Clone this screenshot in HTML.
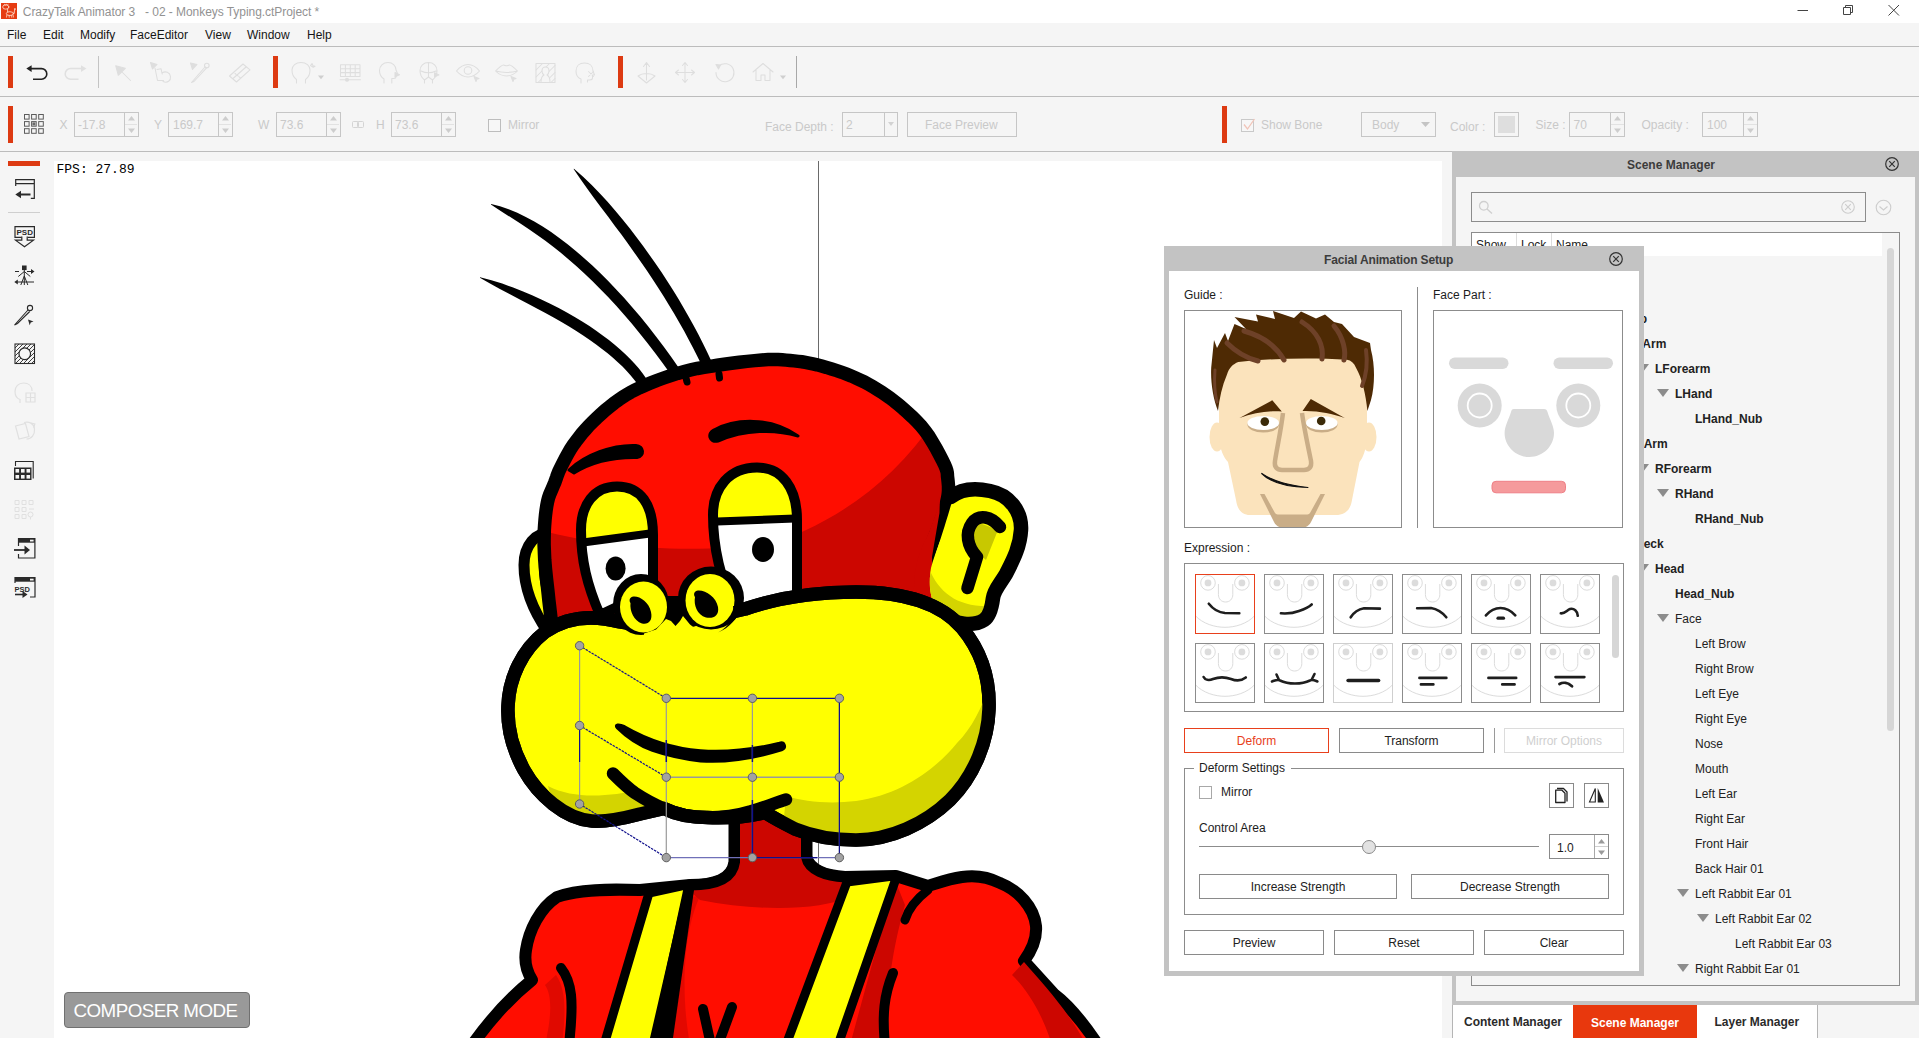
<!DOCTYPE html>
<html>
<head>
<meta charset="utf-8">
<title>CrazyTalk Animator 3</title>
<style>
*{box-sizing:border-box;margin:0;padding:0}
html,body{width:1919px;height:1038px;overflow:hidden;background:#f5f5f5;font-family:"Liberation Sans",sans-serif;font-size:12px;color:#222}
.abs{position:absolute}
#root{position:relative;width:1919px;height:1038px;overflow:hidden;background:#f5f5f5}
.hline{position:absolute;left:0;width:1919px;height:1px;background:#bcbcbc}
.rbar{position:absolute;background:#dd3a12}
.t{position:absolute;white-space:nowrap;line-height:14px}
.dis{color:#c9c9c9}
.box{position:absolute;border:1px solid #c6c6c6;background:#f5f5f5}
.btn{position:absolute;border:1px solid #8a8a8a;background:#fff;text-align:center;font-size:12px;color:#222}
svg{position:absolute;overflow:visible}
/*TOP*/
#titlebar{left:0;top:0;width:1919px;height:23px;background:#fff}
/*CANVAS*/
#canvas{left:54px;top:161px;width:1388px;height:877px;background:#fff;overflow:hidden}
/*SCENE MANAGER*/
#sm{left:1452px;top:151px;width:467px;height:854px;background:#c3c3c3}
#smin{left:4px;top:26px;width:459px;height:824px;background:#f5f5f5}
.tree{position:absolute;white-space:nowrap;line-height:14px;font-size:12px;color:#222}
.tree.b{font-weight:bold}
.tri{position:absolute;width:0;height:0;border-left:6px solid transparent;border-right:6px solid transparent;border-top:8px solid #8c8c8c}
/*DIALOG*/
#dlg{left:1164px;top:246px;width:480px;height:730px;background:#c3c3c3}
#dlgin{left:5px;top:25px;width:470px;height:700px;background:#fff}
</style>
</head>
<body>
<div id="root">

<!-- TITLE BAR -->
<div id="titlebar" class="abs"></div>
<svg style="left:1px;top:3px" width="16" height="16" viewBox="0 0 16 16"><rect width="16" height="16" fill="#e63c12"/><g fill="none" stroke="#ffe6d8" stroke-width=".9" stroke-linecap="round" opacity=".9"><ellipse cx="4.800" cy="4" rx="3.100" ry="2.200"/><path d="M2.800 2.200l.8-.8.900.700.900-.800.800.800.900-.600"/><ellipse cx="8.900" cy="10.600" rx="3.600" ry="1.900"/><path d="M6.600 6.200v2.700M13.900 6.200l-.9 3.800M12.400 10.600l1 -.6"/><path d="M5.800 12.200l-.3 2M8.200 12.500v1.800M10.600 12.400l.2 1.900M12 11.800l.5 2.300" stroke-width=".8"/></g><circle cx="13.900" cy="6" r=".8" fill="#fff3e8"/></svg>
<div class="t" id="ttl" style="left:22.800px;top:4.500px;color:#929292;font-size:12px;letter-spacing:-0.05px">CrazyTalk Animator 3&nbsp;&nbsp; - 02 - Monkeys Typing.ctProject *</div>
<svg style="left:1797px;top:4px" width="104" height="13" viewBox="0 0 104 13" fill="none" stroke="#444" stroke-width="1"><path d="M0.5 6.5h10.5"/><path d="M46.5 3.5h7v7h-7zM48.5 3.5v-2h7v7h-2"/><path d="M91.5 1l10.5 10.5M102 1L91.5 11.5"/></svg>


<!-- MENU -->
<div class="t" style="left:7px;top:27.5px;color:#161616">File</div>
<div class="t" style="left:43px;top:27.5px;color:#161616">Edit</div>
<div class="t" style="left:80px;top:27.5px;color:#161616">Modify</div>
<div class="t" style="left:130px;top:27.5px;color:#161616">FaceEditor</div>
<div class="t" style="left:205px;top:27.5px;color:#161616">View</div>
<div class="t" style="left:247px;top:27.5px;color:#161616">Window</div>
<div class="t" style="left:307px;top:27.5px;color:#161616">Help</div>

<div class="hline" style="top:46px"></div>
<div class="hline" style="top:96px"></div>
<div class="hline" style="top:151px"></div>

<!-- TOOLBAR1 -->
<div class="rbar" style="left:8px;top:56px;width:5px;height:32px"></div>
<div class="rbar" style="left:273px;top:56px;width:5px;height:32px"></div>
<div class="rbar" style="left:618px;top:56px;width:5px;height:32px"></div>
<div class="abs" style="left:98px;top:56px;width:1px;height:32px;background:#c4c4c4"></div>
<div class="abs" style="left:796px;top:56px;width:1px;height:32px;background:#a8a8a8"></div>
<!-- undo -->
<svg style="left:26px;top:64px" width="22" height="17" viewBox="0 0 22 17" fill="none" stroke="#222" stroke-width="1.6"><path d="M4 4.6h11.5a5 5 0 0 1 0 10.6H7"/><path d="M0.3 4.6L5.6 1.2v6.8z" fill="#222" stroke="none"/></svg>
<!-- redo -->
<svg style="left:64px;top:64px" width="23" height="17" viewBox="0 0 23 17" fill="none" stroke="#e0e0e0" stroke-width="1.500"><path d="M18.5 4.6H6.5a5 5 0 0 0 0 10.6h8"/><path d="M22.5 4.6L17 1.2v6.8z" fill="#e0e0e0" stroke="none"/></svg>
<!-- disabled icon group -->
<svg style="left:0;top:47px" width="820" height="49" viewBox="0 47 820 49" fill="none" stroke="#dedede" stroke-width="1.050" stroke-linecap="round" stroke-linejoin="round">
<!-- arrow cursor -->
<path d="M121 71l9.500 9.500"/><path d="M115.700 65.700l9.600 2.600-7 7z" fill="#dedede"/>
<!-- bone select -->
<path d="M150.500 62.500l6.500 2-4.500 4.500z" fill="#dedede"/><path d="M155 68l2.500 12.500h6M157 69.500l4-.8 1.200 5.300M162 73c3.500-2.500 8-.5 8.500 3.500s-3 7-7.500 5"/>
<!-- pin tool -->
<path d="M190.500 63l6.500 1.500-4.500 5z" fill="#dedede"/><circle cx="206.800" cy="65.500" r="2.300"/><path d="M205 67l-13.500 15.500 2.500-1 12.800-13.800"/>
<!-- eraser -->
<path d="M229.500 76l13.500-12 7 5.800-13.500 12.200zM233 78.500l13-11.500" /><path d="M235 73.500l5.500 4.500" stroke-dasharray="1.500 1.200"/>
<!-- head dropdown -->
<path d="M296.500 83v-3.500c-3-2-4.500-5.500-4.500-9.500 0-4.500 3.800-7.500 9-7.500s9 3 9 7.500c0 4-1.500 7.500-4.500 9.500v3.500"/><path d="M310.500 65.500l1.500-2 1 2.200 2 .6-1.800 1z"/>
<path d="M318 75.500h6l-3 3.800z" fill="#cfcfcf" stroke="none"/>
<!-- grid -->
<path d="M340.500 64.800h19.500v11.700h-19.500zM345.400 64.800v11.700M350.300 64.800v11.700M355.200 64.800v11.700M340.500 68.700h19.500M340.500 72.600h19.500M340 79.800h20.500"/><circle cx="347" cy="79.800" r="1.500" fill="#dedede"/>
<!-- head2 -->
<path d="M384 83v-4c-2.500-1.500-4.500-4.500-4.500-8.500 0-4.500 3.500-8 8.500-8 4.500 0 8 3 8 7.500l1.500 3.500h-1.500v3c0 1.200-.8 2-2.200 2h-2v4.500"/><path d="M395 72.500l4.500 2.200-4.500 2.200z" fill="#dedede"/>
<!-- head3 -->
<path d="M424.500 83v-3c-2.500-2-4.500-5-4.500-9.500 0-4.500 3.500-8 8.500-8s8.500 3.500 8.500 8c0 4.500-2 7.500-4.500 9.500v3M428.500 62.500v14M421 71c2.500 1.200 5 1.800 7.500 1.800s5-.6 7.500-1.800M424.500 80l4-3 4 3"/><path d="M434.500 72.700l4.500 2.200-4.500 2.200z" fill="#dedede"/>
<!-- eye -->
<path d="M456.500 71c4-5 8-6.500 11.500-6.500s7.500 1.500 11.500 6.500c-4 4.500-8 6-11.500 6s-7.500-1.500-11.500-6z"/><circle cx="468" cy="70.500" r="3.800"/><path d="M474 76.500l5 2-2.200.8-.8 2.200z" fill="#dedede"/>
<!-- lips -->
<path d="M495.500 71c3-3 6-6 8-6 1.200 0 1.800.8 3 .8s1.800-.8 3-.8c2 0 5 3 8 6-3 3-6 5-11 5s-8-2-11-5zM495.500 71c4 1 7 1.400 11 1.400s7-.4 11-1.400"/><path d="M511 76.500l5 2-2.200.8-.8 2.200z" fill="#dedede"/>
<!-- hatched -->
<path d="M536 63.500h19v19h-19z"/><path d="M536 70l6.500-6.500M536 77l13.500-13.500M538 82.500l17-17M545 82.500l10-10M551 82.500l4-4" /><path d="M541 82c0-4 1-6 3-7-1.500-1-2-2.500-2-4 0-2.500 1.500-4 3.500-4s3.500 1.500 3.500 4c0 1.500-.5 3-2 4 2 1 3 3 3 7" fill="#f5f5f5"/>
<!-- head x -->
<path d="M581 83v-4c-3-1-5-4-5-8 0-5 3.500-8 8.500-8s8.500 3 8.500 8l1.500 4h-2v3c0 1-1 2-3 2h-2v2"/><path d="M588.500 71.500l5 5M593.500 71.500l-5 5"/>
<!-- z move -->
<path d="M646.500 63v17M643.500 66.500l3-4 3 4M638 76c2-1.500 4-2.500 8.500-2.500s6.500 1 8.500 2.500l-8.500 7z"/>
<!-- cross move -->
<path d="M685 63v19M675.500 72.500h19M682.500 65.500l2.500-3 2.500 3M682.500 79.500l2.500 3 2.500-3M678.500 70l-3 2.500 3 2.500M691.500 70l3 2.500-3 2.500"/>
<!-- rotate -->
<path d="M719 66a9 9 0 1 1-3 6.500"/><path d="M716 64.500l4.500.5-2 4z" fill="#dedede"/>
<!-- home -->
<path d="M753 72l10-8.500 10 8.500M756 70v10.500h5v-5.500h4v5.500h5v-10.500"/>
<path d="M780 75.500h6l-3 3.800z" fill="#cfcfcf" stroke="none"/>
</svg>


<!-- TOOLBAR2 -->
<div class="rbar" style="left:8px;top:106px;width:5px;height:36.500px"></div>
<div class="rbar" style="left:1222px;top:106px;width:5px;height:36.500px"></div>
<svg style="left:24px;top:114px" width="21" height="21" viewBox="0 0 21 21" fill="none" stroke="#5c5c5c" stroke-width="1"><rect x="0.50" y="0.50" width="4.6" height="4.6"/><rect x="7.60" y="0.50" width="4.6" height="4.6"/><rect x="14.70" y="0.50" width="4.6" height="4.6"/><rect x="0.50" y="7.60" width="4.6" height="4.6"/><rect x="7.60" y="7.60" width="4.6" height="4.6"/><rect x="14.70" y="7.60" width="4.6" height="4.6"/><rect x="0.50" y="14.70" width="4.6" height="4.6"/><rect x="7.60" y="14.70" width="4.6" height="4.6"/><rect x="14.70" y="14.70" width="4.6" height="4.6"/><rect x="8.400" y="8.400" width="3" height="3" fill="#6a6a6a" stroke="none"/></svg>
<div class="t" style="left:59.5px;top:117.5px;color:#c9c9c9;">X</div>
<div class="box" style="left:74px;top:112px;width:65px;height:25px"></div>
<div class="abs" style="left:124px;top:113px;width:1px;height:23px;background:#c6c6c6"></div>
<div class="abs" style="left:125px;top:124px;width:12px;height:1px;background:#e2e2e2"></div>
<svg style="left:127.5px;top:116px" width="7" height="17" viewBox="0 0 7 17"><path d="M0 4.500h7l-3.500-4.500z M0 12.500h7l-3.500 4.500z" fill="#cdcdcd"/></svg>
<div class="t" style="left:78px;top:117.5px;color:#c9c9c9;">-17.8</div>
<div class="t" style="left:154px;top:117.5px;color:#c9c9c9;">Y</div>
<div class="box" style="left:168px;top:112px;width:65px;height:25px"></div>
<div class="abs" style="left:218px;top:113px;width:1px;height:23px;background:#c6c6c6"></div>
<div class="abs" style="left:219px;top:124px;width:12px;height:1px;background:#e2e2e2"></div>
<svg style="left:221.5px;top:116px" width="7" height="17" viewBox="0 0 7 17"><path d="M0 4.500h7l-3.500-4.500z M0 12.500h7l-3.500 4.500z" fill="#cdcdcd"/></svg>
<div class="t" style="left:173px;top:117.5px;color:#c9c9c9;">169.7</div>
<div class="t" style="left:258px;top:117.5px;color:#c9c9c9;">W</div>
<div class="box" style="left:276px;top:112px;width:65px;height:25px"></div>
<div class="abs" style="left:326px;top:113px;width:1px;height:23px;background:#c6c6c6"></div>
<div class="abs" style="left:327px;top:124px;width:12px;height:1px;background:#e2e2e2"></div>
<svg style="left:329.5px;top:116px" width="7" height="17" viewBox="0 0 7 17"><path d="M0 4.500h7l-3.500-4.500z M0 12.500h7l-3.500 4.500z" fill="#cdcdcd"/></svg>
<div class="t" style="left:280px;top:117.5px;color:#c9c9c9;">73.6</div>
<svg style="left:352px;top:121px" width="12" height="7" viewBox="0 0 12 7" fill="none" stroke="#d4d4d4" stroke-width="1"><rect x=".5" y=".5" width="6" height="6" rx="1"/><rect x="5.500" y=".5" width="6" height="6" rx="1"/></svg>
<div class="t" style="left:376px;top:117.5px;color:#c9c9c9;">H</div>
<div class="box" style="left:391px;top:112px;width:65px;height:25px"></div>
<div class="abs" style="left:441px;top:113px;width:1px;height:23px;background:#c6c6c6"></div>
<div class="abs" style="left:442px;top:124px;width:12px;height:1px;background:#e2e2e2"></div>
<svg style="left:444.5px;top:116px" width="7" height="17" viewBox="0 0 7 17"><path d="M0 4.500h7l-3.500-4.500z M0 12.500h7l-3.500 4.500z" fill="#cdcdcd"/></svg>
<div class="t" style="left:395px;top:117.5px;color:#c9c9c9;">73.6</div>
<div class="abs" style="left:488px;top:119px;width:13px;height:13px;border:1px solid #bdbdbd;background:#f7f7f7"></div>
<div class="t" style="left:508px;top:117.5px;color:#c9c9c9;">Mirror</div>
<div class="t" style="left:765px;top:119.5px;color:#c9c9c9;">Face Depth :</div>
<div class="box" style="left:842px;top:112px;width:56px;height:25px"></div>
<div class="abs" style="left:884px;top:113px;width:1px;height:23px;background:#c6c6c6"></div>
<svg style="left:888px;top:122px" width="6" height="4" viewBox="0 0 6 4"><path d="M0 0h6l-3 4z" fill="#d2d2d2"/></svg>
<div class="t" style="left:846px;top:117.5px;color:#c9c9c9;">2</div>
<div class="box" style="left:907px;top:112px;width:110px;height:25px"></div>
<div class="t" style="left:925px;top:117.5px;color:#c9c9c9;">Face Preview</div>
<div class="abs" style="left:1241px;top:119px;width:13px;height:13px;border:1px solid #c9c9c9;background:#f7f7f7"></div>
<svg style="left:1241px;top:116px" width="16" height="16" viewBox="0 0 16 16" fill="none" stroke="#f1c4b8" stroke-width="1.3"><path d="M3 8.500l3.500 4.500 7-10"/></svg>
<div class="t" style="left:1261px;top:117.5px;color:#c9c9c9;">Show Bone</div>
<div class="box" style="left:1361px;top:112px;width:75px;height:25px"></div>
<div class="t" style="left:1372px;top:117.5px;color:#c9c9c9;">Body</div>
<svg style="left:1420.500px;top:121.500px" width="9" height="5" viewBox="0 0 9 5"><path d="M0 0h9l-4.500 5z" fill="#c4c4c4"/></svg>
<div class="t" style="left:1450px;top:119.5px;color:#c9c9c9;">Color :</div>
<div class="box" style="left:1494px;top:112px;width:25px;height:25px"></div>
<div class="abs" style="left:1498px;top:116px;width:17px;height:17px;background:#dedede"></div>
<div class="t" style="left:1535.5px;top:117.5px;color:#c9c9c9;">Size :</div>
<div class="box" style="left:1569px;top:112px;width:56px;height:25px"></div>
<div class="abs" style="left:1610px;top:113px;width:1px;height:23px;background:#c6c6c6"></div>
<div class="abs" style="left:1611px;top:124px;width:13px;height:1px;background:#e2e2e2"></div>
<svg style="left:1614.0px;top:116px" width="7" height="17" viewBox="0 0 7 17"><path d="M0 4.500h7l-3.500-4.500z M0 12.500h7l-3.500 4.500z" fill="#cdcdcd"/></svg>
<div class="t" style="left:1573.5px;top:117.5px;color:#c9c9c9;">70</div>
<div class="t" style="left:1641.5px;top:117.5px;color:#c9c9c9;">Opacity :</div>
<div class="box" style="left:1702px;top:112px;width:56px;height:25px"></div>
<div class="abs" style="left:1743px;top:113px;width:1px;height:23px;background:#c6c6c6"></div>
<div class="abs" style="left:1744px;top:124px;width:13px;height:1px;background:#e2e2e2"></div>
<svg style="left:1747.0px;top:116px" width="7" height="17" viewBox="0 0 7 17"><path d="M0 4.500h7l-3.500-4.500z M0 12.500h7l-3.500 4.500z" fill="#cdcdcd"/></svg>
<div class="t" style="left:1707px;top:117.5px;color:#c9c9c9;">100</div>


<!-- LEFT TOOLBAR -->
<div class="rbar" style="left:8px;top:161px;width:32px;height:5px"></div>
<div class="abs" style="left:8px;top:212px;width:32px;height:1px;background:#cfcfcf"></div>
<svg style="left:0;top:170px" width="54" height="440" viewBox="0 170 54 440" fill="none" stroke="#2a2a2a" stroke-width="1.4" stroke-linejoin="miter">
<!-- return -->
<path d="M15.700 186v-6.300h18.600v18.600h-3.500M15.700 183.600h18.600" stroke-width="1.2"/><path d="M20 194.500h10.500" stroke-width="2"/><path d="M15.300 194.500l5.700-3.800v7.600z" fill="#2a2a2a" stroke="none"/>
<!-- PSD down -->
<path d="M21.800 237.400h-6.800v-10.700h19.400v10.700h-6.800" stroke-width="1.200"/>
<path d="M21.800 236.500v3.700h-6.300l9 6.600 9-6.600h-6.300v-3.700" stroke-width="1.200" fill="#f5f5f5"/>
<text x="24.700" y="235.300" font-family="Liberation Sans" font-size="8" font-weight="bold" fill="#2a2a2a" stroke="none" text-anchor="middle">PSD</text>
<!-- skeleton -->
<rect x="22" y="265.500" width="4.600" height="4.600" fill="#2a2a2a" stroke="none"/>
<path d="M24.300 270v6M24.300 271.500l-6 5M24.300 271.500l6 5M24.300 276l-3.500 9M24.300 276l3.500 9M24.300 276v9" stroke-width="1"/>
<path d="M15 271.500h4M27 271.500h5M17 282h17" stroke-width="1"/><path d="M34.500 271.500l-3.500-2.500v5zM14.300 282l3.500-2.500v5z" fill="#2a2a2a" stroke="none"/>
<!-- pin -->
<circle cx="30" cy="308" r="2.600" stroke-width="1.100"/><path d="M28 310l-13.500 15 3-1.500 12.200-12" stroke-width="1.100"/><path d="M28 319.500l5.500 2-2.800 1-1 2.800z" fill="#2a2a2a" stroke="none"/>
<!-- hatched circle -->
<rect x="15" y="344" width="19.500" height="19.500" fill="#f5f5f5" stroke-width="1.100"/>
<path d="M15 348l4-4M15 352l8-8M15 356l12-12M15 360l16-16M15.500 363.500l19-19M19.500 363.500l15-15M23.500 363.500l11-11M27.500 363.500l7-7M31.500 363.500l3-3" stroke-width=".9"/>
<circle cx="24.750" cy="353.750" r="5.800" fill="#f5f5f5" stroke-width="1.200"/>
<!-- grid 3x2 dark -->
<path d="M15.500 466v-4.500h17.700v17" stroke-width="1.100"/>
<rect x="14" y="467.500" width="17.500" height="12.500" fill="#2a2a2a" stroke="none"/>
<g fill="#f5f5f5" stroke="none"><rect x="15.500" y="469" width="3.600" height="3.600"/><rect x="21" y="469" width="3.600" height="3.600"/><rect x="26.500" y="469" width="3.600" height="3.600"/><rect x="15.500" y="475" width="3.600" height="3.600"/><rect x="21" y="475" width="3.600" height="3.600"/><rect x="26.500" y="475" width="3.600" height="3.600"/></g>
<!-- import -->
<path d="M18.500 546v-7.500h16.400v19.500h-16.400v-4" stroke-width="1.200"/><rect x="18.500" y="538.500" width="16.400" height="4.200" fill="#2a2a2a" stroke="none"/><rect x="30" y="539.700" width="3.600" height="1.800" fill="#f5f5f5" stroke="none"/>
<path d="M14 550h11" stroke-width="1.800"/><path d="M30 550l-5.500-4.500v9z" fill="#2a2a2a" stroke="none"/>
<!-- psd export -->
<path d="M15 583v-5.500h20v19.500h-5" stroke-width="1.200"/><rect x="15" y="577.500" width="20" height="4.200" fill="#2a2a2a" stroke="none"/><rect x="30" y="578.700" width="3.600" height="1.800" fill="#f5f5f5" stroke="none"/>
<text x="14.500" y="591.500" font-family="Liberation Sans" font-size="7.500" font-weight="bold" fill="#2a2a2a" stroke="none">PSD</text>
<path d="M15 594.500h8" stroke-width="1.600"/><path d="M27.500 594.500l-5-3.500v7z" fill="#2a2a2a" stroke="none"/>
<!-- disabled: head -->
<g stroke="#e0e0e0" stroke-width="1.200">
<path d="M20 403v-3.500c-3-1-5-4-5-8 0-5 3.500-8.500 8.500-8.500s8.500 3 8.500 8"/><path d="M26 393h9v9h-9zM30.500 393v9M26 397.500h9"/>
<path d="M15.500 426l10-2.500 3.500 13-10 2.500zM24 422.500c5-1.500 10 1 10.500 6.500s-3 10-8 10"/><path d="M31 423l3.800 1-1 3.600"/>
<path d="M15 500.500h4v4h-4zM22 500.500h4v4h-4zM29 500.500h4v4h-4zM15 507.500h4v4h-4zM22 507.500h4v4h-4zM15 514.500h4v4h-4zM22 514.500h4v4h-4z" stroke-width="1"/><circle cx="30.500" cy="514.500" r="2.500" stroke-width="1"/><path d="M29 509h5M30.500 517v2.500" stroke-width="1"/>
</g>
</svg>


<!-- CANVAS -->
<div id="canvas" class="abs">
<div class="t" style="left:2.500px;top:0.500px;font-family:'Liberation Mono',monospace;font-size:13px;color:#000;line-height:15px">FPS: 27.89</div>
<svg style="left:0;top:0" width="1388" height="877" viewBox="54 161 1388 877">
<rect x="818" y="161" width="1" height="877" fill="#6a6a6a"/>
<path d="M573.6,169.1 L580.4,179.1 L587.3,188.8 L594.2,198.2 L601.1,207.5 L608.0,216.6 L614.7,225.7 L621.4,234.6 L627.9,243.5 L634.2,252.4 L640.4,261.2 L646.5,270.0 L652.3,278.8 L658.0,287.5 L663.6,296.2 L668.9,304.9 L674.1,313.5 L679.1,322.2 L684.0,330.8 L688.6,339.4 L693.1,347.9 L697.4,356.5 L701.6,365.0 L705.5,373.5 L709.3,382.0 L718.7,378.0 L715.0,369.3 L711.1,360.6 L707.0,351.8 L702.7,343.1 L698.3,334.3 L693.6,325.5 L688.7,316.7 L683.7,307.9 L678.5,299.1 L673.1,290.3 L667.5,281.4 L661.7,272.6 L655.7,263.7 L649.5,254.9 L643.1,246.0 L636.5,237.2 L629.7,228.3 L622.6,219.5 L615.3,210.8 L607.8,202.1 L599.9,193.5 L591.7,185.0 L583.1,176.7 L574.0,168.7Z" fill="#000"/>
<path d="M490.9,204.6 L498.4,209.5 L506.1,214.4 L513.8,219.3 L521.5,224.3 L529.3,229.5 L537.2,234.9 L545.0,240.6 L552.9,246.6 L560.8,252.8 L568.7,259.4 L576.5,266.3 L584.4,273.5 L592.3,281.0 L600.2,288.9 L608.1,297.1 L616.0,305.6 L623.9,314.4 L631.7,323.6 L639.6,333.2 L647.4,343.0 L655.3,353.2 L663.1,363.8 L671.0,374.7 L678.8,385.9 L687.2,380.1 L679.4,368.7 L671.6,357.6 L663.8,346.8 L656.0,336.4 L648.1,326.3 L640.2,316.6 L632.2,307.2 L624.2,298.1 L616.2,289.4 L608.2,281.0 L600.2,273.0 L592.1,265.3 L583.9,257.9 L575.8,250.9 L567.6,244.3 L559.3,238.0 L551.1,232.1 L542.7,226.6 L534.3,221.5 L525.8,216.9 L517.3,212.8 L508.7,209.2 L500.0,206.2 L491.1,204.0Z" fill="#000"/>
<path d="M479.9,277.8 L490.0,283.5 L499.9,288.9 L509.5,294.0 L518.9,298.9 L528.0,303.7 L536.9,308.4 L545.4,313.0 L553.6,317.5 L561.5,322.1 L569.1,326.6 L576.3,331.0 L583.2,335.5 L589.8,340.0 L596.1,344.4 L602.0,348.9 L607.6,353.3 L612.9,357.7 L617.8,362.2 L622.5,366.6 L626.7,371.0 L630.7,375.5 L634.4,379.9 L637.7,384.3 L640.7,388.7 L649.3,383.3 L646.2,378.4 L642.7,373.5 L638.9,368.6 L634.7,363.8 L630.2,359.0 L625.4,354.2 L620.2,349.4 L614.7,344.7 L608.9,340.0 L602.7,335.4 L596.2,330.7 L589.4,326.1 L582.2,321.6 L574.7,317.1 L566.9,312.6 L558.7,308.1 L550.2,303.8 L541.3,299.5 L532.1,295.3 L522.5,291.2 L512.5,287.3 L502.2,283.6 L491.4,280.2 L480.1,277.2Z" fill="#000"/>
<path d="M734.5,805 L734.5,862 C732,880 714,885 690,885 L640,890 C610,889 578,889 557,897 C540,908 529,930 526,950 C524,962 527,972 532,980 C517,992 493,1015 470,1048 L1100,1048 C1085,1025 1070,1006 1054,994 L1024,961 C1032,950 1037,938 1036,926 C1034,907 1018,890 1000,883 C988,877 975,875 962,877 C948,879 938,883 928,886 L896,876 L845,877 C826,876 809,870 806.5,857 L806.5,805 Z" fill="#ff0d00" stroke="#000" stroke-width="12" stroke-linejoin="round"/>
<clipPath id="cb"><path d="M734.5,805 L734.5,862 C732,880 714,885 690,885 L640,890 C610,889 578,889 557,897 C540,908 529,930 526,950 C524,962 527,972 532,980 C517,992 493,1015 470,1048 L1100,1048 C1085,1025 1070,1006 1054,994 L1024,961 C1032,950 1037,938 1036,926 C1034,907 1018,890 1000,883 C988,877 975,875 962,877 C948,879 938,883 928,886 L896,876 L845,877 C826,876 809,870 806.5,857 L806.5,805 Z"/></clipPath>
<g clip-path="url(#cb)">
<path d="M729,800 L813,800 L813,858 C818,872 835,876 850,878 L850,897 C820,910 760,912 700,900 L684,886 C712,886 729,878 729,860Z" fill="#cc0600"/>
<path d="M905,905 C895,940 888,975 884,1045 L850,1045 L895,880Z" fill="#cc0600"/>
<path d="M1024,962 C1044,985 1068,1010 1088,1048 L1053,1048 C1043,1015 1028,990 1012,975Z" fill="#cc0600"/>
<path d="M556,975 C566,990 566,1010 562,1045 L545,1045 C552,1015 552,995 545,985Z" fill="#cc0600" opacity=".6"/>
<path d="M660,900 C655,940 650,990 652,1045 L690,1045 C680,990 684,930 700,896Z" fill="#cc0600" opacity=".55"/>
</g>
<path d="M734.5,810 L734.5,862 C732,880 714,885 690,885" fill="none" stroke="#000" stroke-width="11"/>
<path d="M806.5,810 L806.5,857 C809,870 826,876 845,877" fill="none" stroke="#000" stroke-width="11" stroke-linecap="round"/>
<path d="M561,968 C572,982 574,1000 569,1045" fill="none" stroke="#000" stroke-width="10" stroke-linecap="round"/>
<path d="M893,973 C884,995 882,1015 885,1045" fill="none" stroke="#000" stroke-width="10" stroke-linecap="round"/>
<path d="M928,890 C915,900 908,910 905,920" fill="none" stroke="#000" stroke-width="9" stroke-linecap="round"/>
<path d="M703,1009 L711,1045 M732,1007 L718,1045" fill="none" stroke="#000" stroke-width="10" stroke-linecap="round"/>
<path d="M649,893 L690,884 L653,1045 L604,1045 Z" fill="#ffff00" stroke="#000" stroke-width="9" stroke-linejoin="round"/>
<path d="M695,883 L672,1045 L650,1045 L684,886Z" fill="#000"/>
<path d="M847,882 L897,875.500 L838,1045 L786,1045 Z" fill="#ffff00" stroke="#000" stroke-width="9" stroke-linejoin="round"/>
<path d="M552,532 C535,532 524,546 524,565 C524,590 534,612 548,632 L575,632 L575,532Z" fill="#ffff00" stroke="#000" stroke-width="11" stroke-linejoin="round"/>
<path d="M541,560 C540,580 545,600 553,618" fill="none" stroke="#000" stroke-width="4" stroke-linecap="round"/>
<path d="M551.7,625.4 L551.0,618.3 L550.3,612.4 L549.6,606.4 L548.9,600.6 L548.3,594.8 L547.7,589.3 L547.1,584.0 L546.5,578.9 L546.0,574.0 L545.5,569.2 L545.1,564.4 L544.7,559.6 L544.5,554.7 L544.3,549.8 L544.1,544.9 L544.1,540.0 L544.2,535.2 L544.3,530.3 L544.6,525.3 L545.0,520.2 L545.5,515.1 L546.1,510.2 L546.8,505.6 L547.6,501.5 L548.5,497.9 L549.6,494.7 L550.9,491.6 L552.2,488.6 L553.5,485.5 L554.8,482.4 L555.8,479.7 L556.6,477.4 L557.2,475.5 L557.9,473.7 L558.7,471.6 L560.0,468.9 L561.7,465.5 L563.6,461.7 L565.7,457.6 L568.0,453.5 L570.4,449.4 L573.0,445.4 L575.8,441.5 L578.8,437.6 L581.9,433.6 L585.3,429.7 L588.8,425.8 L592.6,422.0 L596.6,418.1 L600.8,414.2 L605.3,410.2 L609.9,406.5 L614.4,402.9 L618.8,399.7 L623.0,396.9 L626.9,394.4 L630.9,392.1 L635.0,390.0 L639.5,387.8 L644.7,385.5 L650.5,383.1 L656.9,380.5 L663.7,378.0 L670.7,375.6 L677.6,373.4 L684.3,371.5 L690.8,369.9 L697.3,368.5 L703.9,367.4 L710.5,366.3 L717.3,365.3 L724.2,364.3 L731.6,363.3 L739.3,362.3 L747.1,361.4 L754.7,360.6 L761.8,360.0 L768.1,359.6 L773.4,359.5 L778.1,359.5 L782.2,359.7 L786.1,360.1 L790.1,360.5 L794.2,360.9 L798.2,361.4 L801.9,361.8 L805.4,362.4 L809.0,363.1 L812.8,363.9 L817.0,364.8 L821.6,366.0 L826.5,367.4 L831.6,369.0 L836.8,370.6 L841.8,372.3 L846.6,374.1 L851.1,375.9 L855.5,377.8 L859.8,379.8 L864.1,381.8 L868.3,384.1 L872.6,386.5 L876.9,389.2 L881.3,391.9 L885.6,394.8 L890.0,397.9 L894.3,401.2 L898.7,404.8 L903.2,408.6 L907.8,412.7 L912.4,417.0 L916.9,421.4 L921.1,426.0 L925.0,430.8 L928.8,436.1 L932.5,442.1 L936.1,448.3 L939.4,454.5 L942.3,460.1 L944.6,464.8 L946.0,468.2 L946.8,470.6 L947.2,472.3 L947.4,474.0 L947.5,476.2 L947.8,478.8 L948.1,481.4 L948.3,483.8 L948.5,486.1 L948.5,488.5 L948.5,490.9 L948.3,493.3 L948.0,495.8 L947.5,498.5 L946.9,501.2 L946.2,504.1 L945.4,507.1 L944.5,510.1 L943.6,513.2 L942.5,516.4 L941.3,519.7 L940.1,523.1 L938.9,526.4 L937.7,529.6 L936.5,532.6 L935.4,535.4 L934.1,538.3 L932.9,541.3 L931.7,544.6 L930.6,548.0 L929.5,551.5 L928.5,555.1 L927.6,558.8 L926.8,562.7 L926.0,566.8 L925.3,571.1 L924.8,575.4 L924.3,579.8 L924.0,584.4 L923.7,589.2 L923.4,594.3 L923.3,601.1 L926.3,609.2 L931.6,615.9 L935.8,621.2 L937.3,624.4 L936.0,627.5 L926.7,634.1 L906.6,643.8 L878.2,656.0 L844.7,668.6 L808.5,680.2 L772.6,688.9 L739.7,693.3 L706.8,692.3 L671.0,687.2 L635.0,679.4 L601.5,670.2 L573.1,661.1 L552.6,653.8 L542.6,648.6 L541.2,646.5 L542.0,644.9 L545.3,640.3 L549.8,633.6Z" fill="#ff0d00"/>
<clipPath id="ch"><path d="M551.7,625.4 L551.0,618.3 L550.3,612.4 L549.6,606.4 L548.9,600.6 L548.3,594.8 L547.7,589.3 L547.1,584.0 L546.5,578.9 L546.0,574.0 L545.5,569.2 L545.1,564.4 L544.7,559.6 L544.5,554.7 L544.3,549.8 L544.1,544.9 L544.1,540.0 L544.2,535.2 L544.3,530.3 L544.6,525.3 L545.0,520.2 L545.5,515.1 L546.1,510.2 L546.8,505.6 L547.6,501.5 L548.5,497.9 L549.6,494.7 L550.9,491.6 L552.2,488.6 L553.5,485.5 L554.8,482.4 L555.8,479.7 L556.6,477.4 L557.2,475.5 L557.9,473.7 L558.7,471.6 L560.0,468.9 L561.7,465.5 L563.6,461.7 L565.7,457.6 L568.0,453.5 L570.4,449.4 L573.0,445.4 L575.8,441.5 L578.8,437.6 L581.9,433.6 L585.3,429.7 L588.8,425.8 L592.6,422.0 L596.6,418.1 L600.8,414.2 L605.3,410.2 L609.9,406.5 L614.4,402.9 L618.8,399.7 L623.0,396.9 L626.9,394.4 L630.9,392.1 L635.0,390.0 L639.5,387.8 L644.7,385.5 L650.5,383.1 L656.9,380.5 L663.7,378.0 L670.7,375.6 L677.6,373.4 L684.3,371.5 L690.8,369.9 L697.3,368.5 L703.9,367.4 L710.5,366.3 L717.3,365.3 L724.2,364.3 L731.6,363.3 L739.3,362.3 L747.1,361.4 L754.7,360.6 L761.8,360.0 L768.1,359.6 L773.4,359.5 L778.1,359.5 L782.2,359.7 L786.1,360.1 L790.1,360.5 L794.2,360.9 L798.2,361.4 L801.9,361.8 L805.4,362.4 L809.0,363.1 L812.8,363.9 L817.0,364.8 L821.6,366.0 L826.5,367.4 L831.6,369.0 L836.8,370.6 L841.8,372.3 L846.6,374.1 L851.1,375.9 L855.5,377.8 L859.8,379.8 L864.1,381.8 L868.3,384.1 L872.6,386.5 L876.9,389.2 L881.3,391.9 L885.6,394.8 L890.0,397.9 L894.3,401.2 L898.7,404.8 L903.2,408.6 L907.8,412.7 L912.4,417.0 L916.9,421.4 L921.1,426.0 L925.0,430.8 L928.8,436.1 L932.5,442.1 L936.1,448.3 L939.4,454.5 L942.3,460.1 L944.6,464.8 L946.0,468.2 L946.8,470.6 L947.2,472.3 L947.4,474.0 L947.5,476.2 L947.8,478.8 L948.1,481.4 L948.3,483.8 L948.5,486.1 L948.5,488.5 L948.5,490.9 L948.3,493.3 L948.0,495.8 L947.5,498.5 L946.9,501.2 L946.2,504.1 L945.4,507.1 L944.5,510.1 L943.6,513.2 L942.5,516.4 L941.3,519.7 L940.1,523.1 L938.9,526.4 L937.7,529.6 L936.5,532.6 L935.4,535.4 L934.1,538.3 L932.9,541.3 L931.7,544.6 L930.6,548.0 L929.5,551.5 L928.5,555.1 L927.6,558.8 L926.8,562.7 L926.0,566.8 L925.3,571.1 L924.8,575.4 L924.3,579.8 L924.0,584.4 L923.7,589.2 L923.4,594.3 L923.3,601.1 L926.3,609.2 L931.6,615.9 L935.8,621.2 L937.3,624.4 L936.0,627.5 L926.7,634.1 L906.6,643.8 L878.2,656.0 L844.7,668.6 L808.5,680.2 L772.6,688.9 L739.7,693.3 L706.8,692.3 L671.0,687.2 L635.0,679.4 L601.5,670.2 L573.1,661.1 L552.6,653.8 L542.6,648.6 L541.2,646.5 L542.0,644.9 L545.3,640.3 L549.8,633.6Z"/></clipPath><g clip-path="url(#ch)">
<path d="M530,527 C600,550 740,560 804,531 C860,505 900,470 935,420 L1000,420 L1000,700 L500,700Z" fill="#cc0600"/>
</g>
<path d="M551.7,625.4 L551.0,618.3 L550.3,612.4 L549.6,606.4 L548.9,600.6 L548.3,594.8 L547.7,589.3 L547.1,584.0 L546.5,578.9 L546.0,574.0 L545.5,569.2 L545.1,564.4 L544.7,559.6 L544.5,554.7 L544.3,549.8 L544.1,544.9 L544.1,540.0 L544.2,535.2 L544.3,530.3 L544.6,525.3 L545.0,520.2 L545.5,515.1 L546.1,510.2 L546.8,505.6 L547.6,501.5 L548.5,497.9 L549.6,494.7 L550.9,491.6 L552.2,488.6 L553.5,485.5 L554.8,482.4 L555.8,479.7 L556.6,477.4 L557.2,475.5 L557.9,473.7 L558.7,471.6 L560.0,468.9 L561.7,465.5 L563.6,461.7 L565.7,457.6 L568.0,453.5 L570.4,449.4 L573.0,445.4 L575.8,441.5 L578.8,437.6 L581.9,433.6 L585.3,429.7 L588.8,425.8 L592.6,422.0 L596.6,418.1 L600.8,414.2 L605.3,410.2 L609.9,406.5 L614.4,402.9 L618.8,399.7 L623.0,396.9 L626.9,394.4 L630.9,392.1 L635.0,390.0 L639.5,387.8 L644.7,385.5 L650.5,383.1 L656.9,380.5 L663.7,378.0 L670.7,375.6 L677.6,373.4 L684.3,371.5 L690.8,369.9 L697.3,368.5 L703.9,367.4 L710.5,366.3 L717.3,365.3 L724.2,364.3 L731.6,363.3 L739.3,362.3 L747.1,361.4 L754.7,360.6 L761.8,360.0 L768.1,359.6 L773.4,359.5 L778.1,359.5 L782.2,359.7 L786.1,360.1 L790.1,360.5 L794.2,360.9 L798.2,361.4 L801.9,361.8 L805.4,362.4 L809.0,363.1 L812.8,363.9 L817.0,364.8 L821.6,366.0 L826.5,367.4 L831.6,369.0 L836.8,370.6 L841.8,372.3 L846.6,374.1 L851.1,375.9 L855.5,377.8 L859.8,379.8 L864.1,381.8 L868.3,384.1 L872.6,386.5 L876.9,389.2 L881.3,391.9 L885.6,394.8 L890.0,397.9 L894.3,401.2 L898.7,404.8 L903.2,408.6 L907.8,412.7 L912.4,417.0 L916.9,421.4 L921.1,426.0 L925.0,430.8 L928.8,436.1 L932.5,442.1 L936.1,448.3 L939.4,454.5 L942.3,460.1 L944.6,464.8 L946.0,468.2 L946.8,470.6 L947.2,472.3 L947.4,474.0 L947.5,476.2 L947.8,478.8 L948.1,481.4 L948.3,483.8 L948.5,486.1 L948.5,488.5 L948.5,490.9 L948.3,493.3 L948.0,495.8 L947.5,498.5 L946.9,501.2 L946.2,504.1 L945.4,507.1 L944.5,510.1 L943.6,513.2 L942.5,516.4 L941.3,519.7 L940.1,523.1 L938.9,526.4 L937.7,529.6 L936.5,532.6 L935.4,535.4 L934.1,538.3 L932.9,541.3 L931.7,544.6 L930.6,548.0 L929.5,551.5 L928.5,555.1 L927.6,558.8 L926.8,562.7 L926.0,566.8 L925.3,571.1 L924.8,575.4 L924.3,579.8 L924.0,584.4 L923.7,589.2 L923.4,594.3 L923.3,601.1 L926.3,609.2 L931.6,615.9 L935.8,621.2 L937.3,624.4 L936.0,627.5 L926.7,634.1 L906.6,643.8 L878.2,656.0 L844.7,668.6 L808.5,680.2 L772.6,688.9 L739.7,693.3 L706.8,692.3 L671.0,687.2 L635.0,679.4 L601.5,670.2 L573.1,661.1 L552.6,653.8 L542.6,648.6 L541.2,646.5 L542.0,644.9 L545.3,640.3 L549.8,633.6Z" fill="none" stroke="#000" stroke-width="13.500"/>
<path d="M686,378 l1,4 M719,374 l.500,4" stroke="#000" stroke-width="7" stroke-linecap="round"/>
<path d="M569,470 C585,455 612,444.500 636,445.500 C644,446 645,456 637,457.500 C612,457 590,463 574,473Z" fill="#000" stroke="#000" stroke-width="3" stroke-linejoin="round"/>
<path d="M714,430 C735,418.500 770,416.500 798,436 C775,429 745,429.500 718,441 C709,443 707,433 714,430Z" fill="#000" stroke="#000" stroke-width="3" stroke-linejoin="round"/>
<path d="M617,486.500 C641,486.500 653,505 653,535 L653,590 L600,615 C587,585 581,560 581,530 C581,505 594,486.500 617,486.500Z" fill="#fff"/>
<clipPath id="cl"><path d="M617,486.500 C641,486.500 653,505 653,535 L653,590 L600,615 C587,585 581,560 581,530 C581,505 594,486.500 617,486.500Z"/></clipPath><g clip-path="url(#cl)"><path d="M570,480 L660,480 L660,532 L570,544Z" fill="#ffff00"/></g>
<path d="M617,486.500 C641,486.500 653,505 653,535 L653,590 L600,615 C587,585 581,560 581,530 C581,505 594,486.500 617,486.500Z" fill="none" stroke="#000" stroke-width="10" stroke-linejoin="round"/>
<path d="M583,542.500 L650,533.500" stroke="#000" stroke-width="8" stroke-linecap="round"/>
<ellipse cx="615.600" cy="568.500" rx="10" ry="12" fill="#000"/>
<path d="M757,467.500 C782,467.500 797,488 797,520 L797,600 L735,610 C721,580 713,550 713,515 C713,488 729,467.500 757,467.500Z" fill="#fff"/>
<clipPath id="cr"><path d="M757,467.500 C782,467.500 797,488 797,520 L797,600 L735,610 C721,580 713,550 713,515 C713,488 729,467.500 757,467.500Z"/></clipPath><g clip-path="url(#cr)"><path d="M700,460 L805,460 L805,518 L700,522Z" fill="#ffff00"/></g>
<path d="M757,467.500 C782,467.500 797,488 797,520 L797,600 L735,610 C721,580 713,550 713,515 C713,488 729,467.500 757,467.500Z" fill="none" stroke="#000" stroke-width="10" stroke-linejoin="round"/>
<path d="M717,521.500 L795,518.500" stroke="#000" stroke-width="8" stroke-linecap="round"/>
<ellipse cx="763" cy="549.500" rx="11" ry="12.500" fill="#000"/>
<path d="M940,496 L936,513 L929,532 L923,545 L918,558 L915,572 L913,602 L932,602 L931.500,575 L932.500,570 L932,557 L934.500,542 L939.500,513 Z" fill="#cc0600"/>
<path d="M954,495 C964,488 976,488 990,491 C1010,495 1022,512 1021,530 C1020,548 1012,562 1006,574 C1000,584 994,590 993,598 C992,606 990,616 984,620 C975,626 955,626 940,614 C934,606 931,598 930,588 C929.500,580 930,574 931,568 C933,560 936,552 938.500,545 C941,538 946,522 954,495Z" fill="#ffff00"/>
<clipPath id="ce"><path d="M954,495 C964,488 976,488 990,491 C1010,495 1022,512 1021,530 C1020,548 1012,562 1006,574 C1000,584 994,590 993,598 C992,606 990,616 984,620 C975,626 955,626 940,614 C934,606 931,598 930,588 C929.500,580 930,574 931,568 C933,560 936,552 938.500,545 C941,538 946,522 954,495Z"/></clipPath><g clip-path="url(#ce)">
<path d="M926,560 C935,590 955,608 992,606 L992,640 L920,640Z" fill="#d4d400"/>
<path d="M977,522 L998,530 L986,560 L972,548Z" fill="#c8c800"/>
</g>
<path d="M951,497 C962,488 976,488 990,491 C1010,495 1022,512 1021,530 C1020,548 1012,562 1006,574 C1000,584 994,590 993,598 C992,606 990,616 984,620 C975,626 955,626 940,614" fill="none" stroke="#000" stroke-width="14.500" stroke-linecap="round" stroke-linejoin="round"/>
<path d="M1000,527 C991,516 979,514 972,523 C965,533 967,546 977,557 L967.500,588" fill="none" stroke="#000" stroke-width="12.500" stroke-linecap="round" stroke-linejoin="round"/>
<path d="M545,632 C565,618 590,614 620,622 C650,628 690,622 745,609 C780,597 820,592 856,592 C900,592 940,602 962,628 C982,652 990,680 989,709 C988,740 975,775 950,800 C925,824 890,840 856,840 C835,840 812,836 795,829 C785,824 775,819 765,812.500 C748,816.500 727,818.500 707,817.500 C690,817.500 676,814.500 664,808.500 L640,814 C625,818 608,822 592,821 C565,819 538,795 524,770 C512,748 507,728 508,706 C509,678 522,650 545,632Z" fill="#ffff00" stroke="#000" stroke-width="13.500" stroke-linejoin="round"/>
<clipPath id="cm"><path d="M545,632 C565,618 590,614 620,622 C650,628 690,622 745,609 C780,597 820,592 856,592 C900,592 940,602 962,628 C982,652 990,680 989,709 C988,740 975,775 950,800 C925,824 890,840 856,840 C835,840 812,836 795,829 C785,824 775,819 765,812.500 C748,816.500 727,818.500 707,817.500 C690,817.500 676,814.500 664,808.500 L640,814 C625,818 608,822 592,821 C565,819 538,795 524,770 C512,748 507,728 508,706 C509,678 522,650 545,632Z"/></clipPath><g clip-path="url(#cm)">
<path d="M995,670 C985,700 975,725 957,743 C935,770 900,795 856,801 C830,804 805,802 786,796 L780,860 L1010,860Z" fill="#d4d400"/>
<path d="M548,786 C575,800 610,796 640,790 L660,806 L640,830 L560,830Z" fill="#d4d400"/>
</g>
<path d="M545,632 C565,618 590,614 620,622 C650,628 690,622 745,609 C780,597 820,592 856,592 C900,592 940,602 962,628 C982,652 990,680 989,709 C988,740 975,775 950,800 C925,824 890,840 856,840 C835,840 812,836 795,829 C785,824 775,819 765,812.500 C748,816.500 727,818.500 707,817.500 C690,817.500 676,814.500 664,808.500 L640,814 C625,818 608,822 592,821 C565,819 538,795 524,770 C512,748 507,728 508,706 C509,678 522,650 545,632Z" fill="none" stroke="#000" stroke-width="13.500" stroke-linejoin="round"/>
<path d="M613,771 C620,778 627,785 635,790.500 C645,797 654,802 664,806 C678,812 692,815 707,815 C722,815 737,813 750,809 C765,805 776,800 786,797" fill="none" stroke="#000" stroke-width="12.500" stroke-linecap="round" transform="translate(0 2.500)"/>
<path d="M617,724 C628,735 640,742 652,746.500 C665,751 680,755 700,757 C728,759 755,754 781,746 C786,744 784,738 779,739.500 C752,746 728,749 700,747 C675,745 650,738 624,723 C618,720 614,721 617,724Z" fill="#000" stroke="#000" stroke-width="3.200" stroke-linejoin="round" transform="translate(0.5 3.8)"/>
<ellipse cx="641" cy="604.500" rx="28" ry="30.500" fill="#000"/><ellipse cx="711" cy="598" rx="33" ry="31.500" fill="#000"/>
<path d="M662,596 L690,596 L688,613 L682,620.500 L675.500,624 L669.500,620.500 L663,613Z" fill="#000"/>
<ellipse cx="643.500" cy="607" rx="23.500" ry="25.500" fill="#ffff00"/><ellipse cx="710" cy="600.500" rx="24.500" ry="26.500" fill="#ffff00"/>
<path d="M644,633.500 L656,629.500 L666,619 L671,621 L675.500,626 L680,621 L683,616 L690,624.500 L697,630 L708,631.500 L719,633 L733,621 L745,616.500 L760,640 L644,648Z" fill="#ffff00"/>
<path d="M733,606 C735,616 730,626 718,632.500 C729,628 739,618 741,606Z" fill="#000"/>
<path d="M633.500,596.500 C640,596 649,602 651,612 C653,621 648,625 642,623.500 C634,621 629.500,611 630.500,603 C628.500,600 630,597 633.500,596.500Z" fill="#000"/>
<path d="M698,590.500 C706,590 716,597 718,607 C719.500,616 713,619 706,617.500 C697,615 693.500,605 695,597 C693,594 694.500,591 698,590.500Z" fill="#000"/>
<path d="M579.6,645.7 L579.6,804" stroke="#9a9a9a" stroke-width="1.2" fill="none"/>
<path d="M579.6,725.5 L579.6,762" stroke="#10108c" stroke-width="1.2" fill="none"/>
<path d="M579.6,645.7 L666.3,698.3" stroke="#10108c" stroke-width="1.2" fill="none" stroke-dasharray="2.500 1"/>
<path d="M579.6,725.5 L666.3,777.2" stroke="#10108c" stroke-width="1.2" fill="none" stroke-dasharray="2.500 1"/>
<path d="M579.6,804 L666.3,857.6" stroke="#10108c" stroke-width="1.2" fill="none" stroke-dasharray="2.500 1"/>
<path d="M666.3,698.3 L666.3,857.6" stroke="#9a9a9a" stroke-width="1.2" fill="none"/>
<path d="M752.4,698.3 L752.4,857.6" stroke="#9a9a9a" stroke-width="1.2" fill="none"/>
<path d="M839.4,698.3 L839.4,857.6" stroke="#9a9a9a" stroke-width="1.2" fill="none"/>
<path d="M666.3,740 L666.3,762" stroke="#10108c" stroke-width="1.5" fill="none"/>
<path d="M752.4,745 L752.4,762" stroke="#10108c" stroke-width="1.5" fill="none"/>
<path d="M752.4,800 L752.4,857.6" stroke="#10108c" stroke-width="1.5" fill="none"/>
<path d="M839.4,698.3 L839.4,857.6" stroke="#10108c" stroke-width="1.2" fill="none"/>
<path d="M666.3,698.3 L839.4,698.3" stroke="#10108c" stroke-width="1.2" fill="none"/>
<path d="M666.3,777.2 L839.4,777.2" stroke="#9a9a9a" stroke-width="1.4" fill="none"/>
<path d="M666.3,857.6 L839.4,857.6" stroke="#7070b8" stroke-width="1.2" fill="none"/>
<path d="M752.4,857.6 L817,857.6" stroke="#10108c" stroke-width="1.4" fill="none"/>
<circle cx="579.6" cy="645.7" r="4.200" fill="#a2a2a2" stroke="#5e5e5e" stroke-width="1"/>
<circle cx="579.6" cy="725.5" r="4.200" fill="#a2a2a2" stroke="#5e5e5e" stroke-width="1"/>
<circle cx="579.6" cy="804" r="4.200" fill="#a2a2a2" stroke="#5e5e5e" stroke-width="1"/>
<circle cx="666.3" cy="698.3" r="4.200" fill="#a2a2a2" stroke="#5e5e5e" stroke-width="1"/>
<circle cx="666.3" cy="777.2" r="4.200" fill="#a2a2a2" stroke="#5e5e5e" stroke-width="1"/>
<circle cx="666.3" cy="857.6" r="4.200" fill="#a2a2a2" stroke="#5e5e5e" stroke-width="1"/>
<circle cx="752.4" cy="698.3" r="4.200" fill="#a2a2a2" stroke="#5e5e5e" stroke-width="1"/>
<circle cx="752.4" cy="777.2" r="4.200" fill="#a2a2a2" stroke="#5e5e5e" stroke-width="1"/>
<circle cx="752.4" cy="857.6" r="4.200" fill="#a2a2a2" stroke="#5e5e5e" stroke-width="1"/>
<circle cx="839.4" cy="698.3" r="4.200" fill="#a2a2a2" stroke="#5e5e5e" stroke-width="1"/>
<circle cx="839.4" cy="777.2" r="4.200" fill="#a2a2a2" stroke="#5e5e5e" stroke-width="1"/>
<circle cx="839.4" cy="857.6" r="4.200" fill="#a2a2a2" stroke="#5e5e5e" stroke-width="1"/>
</svg>
<div class="abs" style="left:10px;top:831px;width:186px;height:36px;background:#999;border:1px solid #707070;border-radius:4px"></div>
<div class="t" id="cmode" style="left:19.500px;top:839px;font-size:18.800px;line-height:22px;color:#fff;letter-spacing:-0.55px">COMPOSER MODE</div>

</div>

<!-- SCENE MANAGER -->
<div id="sm" class="abs"><div id="smin" class="abs"></div></div>
<div class="t" style="left:1627px;top:157.500px;font-weight:bold;color:#3c3c3c">Scene Manager</div>
<svg style="left:1884px;top:156px" width="16" height="16" viewBox="0 0 16 16" fill="none" stroke="#333" stroke-width="1.200"><circle cx="8" cy="8" r="6.300"/><path d="M5.200 5.200l5.600 5.600M10.800 5.200l-5.600 5.600"/></svg>
<div class="abs" style="left:1471px;top:192px;width:395px;height:30px;border:1px solid #8c8c8c;background:#f5f5f5"></div>
<svg style="left:1478px;top:200px" width="16" height="15" viewBox="0 0 16 15" fill="none" stroke="#cfcfcf" stroke-width="1.300"><circle cx="5.800" cy="5.800" r="4.300"/><path d="M9 9l5 4.500"/></svg>
<svg style="left:1840px;top:199px" width="16" height="16" viewBox="0 0 16 16" fill="none" stroke="#cdcdcd" stroke-width="1.100"><circle cx="8" cy="8" r="6.300"/><path d="M5.200 5.200l5.600 5.600M10.800 5.200l-5.600 5.600"/></svg>
<svg style="left:1875px;top:199px" width="17" height="17" viewBox="0 0 17 17" fill="none" stroke="#cdcdcd" stroke-width="1.100"><circle cx="8.500" cy="8.500" r="7.300"/><path d="M4.500 7.500l4 3.500 4-3.500"/></svg>
<div class="abs" style="left:1471px;top:232px;width:429px;height:754px;border:1px solid #8c8c8c;background:#f5f5f5"></div>
<div class="abs" style="left:1472px;top:233px;width:410px;height:23px;background:#fff"></div>
<div class="abs" style="left:1516px;top:233px;width:1px;height:23px;background:#dcdcdc"></div>
<div class="abs" style="left:1551px;top:233px;width:1px;height:23px;background:#dcdcdc"></div>
<div class="t" style="left:1476px;top:237.500px;color:#222">Show</div>
<div class="t" style="left:1521px;top:237.500px;color:#222">Lock</div>
<div class="t" style="left:1556px;top:237.500px;color:#222">Name</div>
<div class="abs" style="left:1887px;top:248px;width:7px;height:483px;border-radius:3.500px;background:#d6d6d6"></div>
<div class="tree b" style="left:1627.7px;top:311.7px">Hip</div>
<div class="tree b" style="left:1635px;top:336.7px">LArm</div>
<div class="tri" style="left:1616.5px;top:339px"></div>
<div class="tree b" style="left:1655px;top:361.7px">LForearm</div>
<div class="tri" style="left:1636.5px;top:364px"></div>
<div class="tree b" style="left:1675px;top:386.7px">LHand</div>
<div class="tri" style="left:1656.5px;top:389px"></div>
<div class="tree b" style="left:1695px;top:411.7px">LHand_Nub</div>
<div class="tree b" style="left:1635px;top:436.7px">RArm</div>
<div class="tri" style="left:1616.5px;top:439px"></div>
<div class="tree b" style="left:1655px;top:461.7px">RForearm</div>
<div class="tri" style="left:1636.5px;top:464px"></div>
<div class="tree b" style="left:1675px;top:486.7px">RHand</div>
<div class="tri" style="left:1656.5px;top:489px"></div>
<div class="tree b" style="left:1695px;top:511.7px">RHand_Nub</div>
<div class="tree b" style="left:1635px;top:536.7px">Neck</div>
<div class="tri" style="left:1616.5px;top:539px"></div>
<div class="tree b" style="left:1655px;top:561.7px">Head</div>
<div class="tri" style="left:1636.5px;top:564px"></div>
<div class="tree b" style="left:1675px;top:586.7px">Head_Nub</div>
<div class="tree" style="left:1675px;top:611.7px">Face</div>
<div class="tri" style="left:1656.5px;top:614px"></div>
<div class="tree" style="left:1695px;top:636.7px">Left Brow</div>
<div class="tree" style="left:1695px;top:661.7px">Right Brow</div>
<div class="tree" style="left:1695px;top:686.7px">Left Eye</div>
<div class="tree" style="left:1695px;top:711.7px">Right Eye</div>
<div class="tree" style="left:1695px;top:736.7px">Nose</div>
<div class="tree" style="left:1695px;top:761.7px">Mouth</div>
<div class="tree" style="left:1695px;top:786.7px">Left Ear</div>
<div class="tree" style="left:1695px;top:811.7px">Right Ear</div>
<div class="tree" style="left:1695px;top:836.7px">Front Hair</div>
<div class="tree" style="left:1695px;top:861.7px">Back Hair 01</div>
<div class="tree" style="left:1695px;top:886.7px">Left Rabbit Ear 01</div>
<div class="tri" style="left:1676.5px;top:889px"></div>
<div class="tree" style="left:1715px;top:911.7px">Left Rabbit Ear 02</div>
<div class="tri" style="left:1696.5px;top:914px"></div>
<div class="tree" style="left:1735px;top:936.7px">Left Rabbit Ear 03</div>
<div class="tree" style="left:1695px;top:961.7px">Right Rabbit Ear 01</div>
<div class="tri" style="left:1676.5px;top:964px"></div>


<!-- BOTTOM TABS -->
<div class="abs" style="left:1452px;top:1005px;width:366px;height:33px;background:#fff;border-left:1px solid #b5b5b5;border-right:1px solid #b5b5b5"></div>
<div class="abs" style="left:1573px;top:1005px;width:123.500px;height:33px;background:#e8380d"></div>
<div class="t" style="left:1464px;top:1014.500px;font-weight:bold;color:#2a2a2a">Content Manager</div>
<div class="t" style="left:1591px;top:1015.500px;font-weight:bold;color:#fff">Scene Manager</div>
<div class="t" style="left:1714.500px;top:1014.500px;font-weight:bold;color:#2a2a2a">Layer Manager</div>


<!-- DIALOG -->
<div id="dlg" class="abs"><div id="dlgin" class="abs"></div></div>
<div class="t" style="left:1324px;top:252.800px;font-weight:bold;color:#3c3c3c;letter-spacing:-0.14px">Facial Animation Setup</div>
<svg style="left:1608px;top:251px" width="16" height="16" viewBox="0 0 16 16" fill="none" stroke="#333" stroke-width="1.200"><circle cx="8" cy="8" r="6.300"/><path d="M5.200 5.200l5.600 5.600M10.800 5.200l-5.600 5.600"/></svg>
<div class="t" style="left:1184px;top:288.200px;color:#1c1c1c">Guide :</div>
<div class="t" style="left:1433px;top:288.200px;color:#1c1c1c">Face Part :</div>
<div class="abs" style="left:1417px;top:287px;width:1px;height:241px;background:#8c8c8c"></div>
<div class="abs" style="left:1184px;top:310px;width:218px;height:218px;border:1px solid #8c8c8c;background:#fff;overflow:hidden">
<svg style="left:-1px;top:-1px" width="218" height="218" viewBox="0 0 218 218">
<ellipse cx="33" cy="127" rx="7.500" ry="14.500" fill="#fbe3bc"/><ellipse cx="185" cy="127" rx="7.500" ry="14.500" fill="#fbe3bc"/>
<path d="M35 48 L183 48 L183 128 C182 140 179 148 175.500 152 L168 190 C166.500 200 161 205 152 205 L66 205 C58 205 53.500 200 52 190 L44 152 C40 148 36 140 35 128Z" fill="#fbe3bc"/>
<path d="M34 101 C29 88 26.500 72 27.200 57.700 L30 30 L33 38 L41 23 L44 31 L50.500 14 L62 19 L50.500 7 L74 11.500 L72 4.500 L91 9 L89 1 L110 8 L117 1.500 L132 8.500 L141 4.500 L150 12 L158 14 L170 27 L186 33 L187 40 C191 55 191 75 187 90 L183.400 101 C182 85 178 68 172 57.700 C170 53 167 50.500 163 49.800 C130 47.500 90 48 54.300 52 C49 54 45 58 43 64.500 C38 76 35.500 88 34 101Z" fill="#4e2a04"/>
<g fill="none" stroke="#6e4128" stroke-width="5" stroke-linecap="round"><path d="M43 33 C52 42 62 48 74 51"/><path d="M60 21 C78 26 92 36 100 50"/><path d="M118 12 C134 22 140 36 138 49"/><path d="M150 16 C160 28 162 42 160 50"/><path d="M182 40 C184 54 182 66 178 76" stroke-width="4"/><path d="M31 60 C30 72 31 84 33 92" stroke-width="3"/></g>
<path d="M55.500 108 L88.300 90.300 L97.800 101.500 C84 100.500 70 103 55.500 108Z" fill="#4e2a04"/>
<path d="M118.500 101 L126.800 89 L160.700 108 C148 103.500 134 100.500 118.500 101Z" fill="#4e2a04"/>
<ellipse cx="79.200" cy="114.500" rx="15.800" ry="8" fill="#c9ad87"/><ellipse cx="79.200" cy="113" rx="15.800" ry="7" fill="#fff"/>
<ellipse cx="137.800" cy="114.500" rx="15.800" ry="8" fill="#c9ad87"/><ellipse cx="137.800" cy="113" rx="15.800" ry="7" fill="#fff"/>
<circle cx="80.800" cy="111.600" r="4.300" fill="#3b2a08"/><circle cx="137.200" cy="111" r="4.300" fill="#3b2a08"/>
<path d="M99 103 C97 120 93 138 91 151 C90 157 93 160 98 160 L120 160 C125 160 128 157 127 151 C124 136 120 118 118 103" fill="none" stroke="#c9ad87" stroke-width="4.500" stroke-linejoin="round"/>
<path d="M77.700 163.500 C85 171 100 177 123.900 177.500 C105 175 90 172 77.700 163.500Z" fill="#111" stroke="#111" stroke-width="1.200" stroke-linejoin="round"/>
<path d="M76 184 L90 212 C92 216 96 218 100 218 L117 218 C121 218 125 216 127 212 L141 184 L136.500 184 L126 203 C125 204 124 204.500 122 204.500 L95 204.500 C93 204.500 92 204 91 203 L80.500 184Z" fill="#c9ad87"/>
</svg>
</div>
<div class="abs" style="left:1433px;top:310px;width:190px;height:218px;border:1px solid #8c8c8c;background:#fff"></div>
<svg style="left:1433px;top:310px" width="190" height="218" viewBox="1433 310 190 218">
<rect x="1449" y="357.500" width="59.500" height="11.500" rx="5.750" fill="#d9d9d9"/><rect x="1553.500" y="357.500" width="59.500" height="11.500" rx="5.750" fill="#d9d9d9"/>
<circle cx="1479.700" cy="405.500" r="22" fill="#d9d9d9"/><circle cx="1479.700" cy="405.500" r="12" fill="none" stroke="#fff" stroke-width="1.800"/>
<circle cx="1578.300" cy="405.500" r="22" fill="#d9d9d9"/><circle cx="1578.300" cy="405.500" r="12" fill="none" stroke="#fff" stroke-width="1.800"/>
<path d="M1514 409 L1544 409 C1546 409 1547 410 1547.500 412 C1550 420 1554 426 1554 433 C1554 446 1543 457 1529.300 457 C1515.500 457 1504.600 446 1504.600 433 C1504.600 426 1508.500 420 1511 412 C1511.500 410 1512 409 1514 409Z" fill="#d9d9d9"/>
<rect x="1492" y="481.300" width="73.500" height="11.500" rx="4" fill="#f59a9c" stroke="#ee7f86" stroke-width="1"/>
</svg>
<div class="t" style="left:1184px;top:541.200px;color:#1c1c1c">Expression :</div>
<div class="abs" style="left:1184px;top:563px;width:440px;height:149px;border:1px solid #8c8c8c;background:#fff"></div>
<div class="abs" style="left:1612px;top:574.500px;width:7px;height:83px;border-radius:3.500px;background:#d6d6d6"></div>
<div class="abs" style="left:1195.0px;top:574px;width:60px;height:60px;border:1px solid #e8401c;background:#fff;overflow:hidden"><svg style="left:-1px;top:-1px" width="60" height="60" viewBox="0 0 60 60" fill="none" stroke="#dcdcdc" stroke-width="1"><circle cx="13" cy="8.900" r="7.300"/><circle cx="46.900" cy="8.900" r="7.300"/><circle cx="13" cy="8.900" r="3.400" fill="#dcdcdc" stroke="none"/><circle cx="46.900" cy="8.900" r="3.400" fill="#dcdcdc" stroke="none"/><path d="M23.400 10 V20.500 C23.400 25 26.500 28 30.600 28 C34.700 28 37.800 25 37.800 20.500 V10"/><path d="M0 41.400 C8 50 20 53.300 30 53.300 C40 53.300 52 50 60 41.400"/><g stroke="#1e1e1e" stroke-width="2.600" stroke-linecap="round" stroke-linejoin="round"><path d="M13.800 29.700 C18 35 24 38.500 30 39 L44.300 39.300" /></g></svg></div>
<div class="abs" style="left:1264.0px;top:574px;width:60px;height:60px;border:1px solid #8c8c8c;background:#fff;overflow:hidden"><svg style="left:-1px;top:-1px" width="60" height="60" viewBox="0 0 60 60" fill="none" stroke="#dcdcdc" stroke-width="1"><circle cx="13" cy="8.900" r="7.300"/><circle cx="46.900" cy="8.900" r="7.300"/><circle cx="13" cy="8.900" r="3.400" fill="#dcdcdc" stroke="none"/><circle cx="46.900" cy="8.900" r="3.400" fill="#dcdcdc" stroke="none"/><path d="M23.400 10 V20.500 C23.400 25 26.500 28 30.600 28 C34.700 28 37.800 25 37.800 20.500 V10"/><path d="M0 41.400 C8 50 20 53.300 30 53.300 C40 53.300 52 50 60 41.400"/><g stroke="#1e1e1e" stroke-width="2.600" stroke-linecap="round" stroke-linejoin="round"><path d="M16.900 39.300 C24 39.800 30 39 35 37 C41 35 45 33 47.700 30.500"/></g></svg></div>
<div class="abs" style="left:1333.1px;top:574px;width:60px;height:60px;border:1px solid #8c8c8c;background:#fff;overflow:hidden"><svg style="left:-1px;top:-1px" width="60" height="60" viewBox="0 0 60 60" fill="none" stroke="#dcdcdc" stroke-width="1"><circle cx="13" cy="8.900" r="7.300"/><circle cx="46.900" cy="8.900" r="7.300"/><circle cx="13" cy="8.900" r="3.400" fill="#dcdcdc" stroke="none"/><circle cx="46.900" cy="8.900" r="3.400" fill="#dcdcdc" stroke="none"/><path d="M23.400 10 V20.500 C23.400 25 26.500 28 30.600 28 C34.700 28 37.800 25 37.800 20.500 V10"/><path d="M0 41.400 C8 50 20 53.300 30 53.300 C40 53.300 52 50 60 41.400"/><g stroke="#1e1e1e" stroke-width="2.600" stroke-linecap="round" stroke-linejoin="round"><path d="M17.700 43.300 C21 38 26 35 31 34.200 L46.900 34.600"/></g></svg></div>
<div class="abs" style="left:1402.2px;top:574px;width:60px;height:60px;border:1px solid #8c8c8c;background:#fff;overflow:hidden"><svg style="left:-1px;top:-1px" width="60" height="60" viewBox="0 0 60 60" fill="none" stroke="#dcdcdc" stroke-width="1"><circle cx="13" cy="8.900" r="7.300"/><circle cx="46.900" cy="8.900" r="7.300"/><circle cx="13" cy="8.900" r="3.400" fill="#dcdcdc" stroke="none"/><circle cx="46.900" cy="8.900" r="3.400" fill="#dcdcdc" stroke="none"/><path d="M23.400 10 V20.500 C23.400 25 26.500 28 30.600 28 C34.700 28 37.800 25 37.800 20.500 V10"/><path d="M0 41.400 C8 50 20 53.300 30 53.300 C40 53.300 52 50 60 41.400"/><g stroke="#1e1e1e" stroke-width="2.600" stroke-linecap="round" stroke-linejoin="round"><path d="M15.100 34.300 L29 34 C35 35 40 38 44.300 43.300"/></g></svg></div>
<div class="abs" style="left:1471.2px;top:574px;width:60px;height:60px;border:1px solid #8c8c8c;background:#fff;overflow:hidden"><svg style="left:-1px;top:-1px" width="60" height="60" viewBox="0 0 60 60" fill="none" stroke="#dcdcdc" stroke-width="1"><circle cx="13" cy="8.900" r="7.300"/><circle cx="46.900" cy="8.900" r="7.300"/><circle cx="13" cy="8.900" r="3.400" fill="#dcdcdc" stroke="none"/><circle cx="46.900" cy="8.900" r="3.400" fill="#dcdcdc" stroke="none"/><path d="M23.400 10 V20.500 C23.400 25 26.500 28 30.600 28 C34.700 28 37.800 25 37.800 20.500 V10"/><path d="M0 41.400 C8 50 20 53.300 30 53.300 C40 53.300 52 50 60 41.400"/><g stroke="#1e1e1e" stroke-width="2.600" stroke-linecap="round" stroke-linejoin="round"><path d="M14.900 41.400 C20 35.500 25 34 29.500 34 C34 34 39 35.500 44.300 41.400"/><path d="M27 44.200 L32.500 44.200" stroke-width="3.200"/></g></svg></div>
<div class="abs" style="left:1540.2px;top:574px;width:60px;height:60px;border:1px solid #8c8c8c;background:#fff;overflow:hidden"><svg style="left:-1px;top:-1px" width="60" height="60" viewBox="0 0 60 60" fill="none" stroke="#dcdcdc" stroke-width="1"><circle cx="13" cy="8.900" r="7.300"/><circle cx="46.900" cy="8.900" r="7.300"/><circle cx="13" cy="8.900" r="3.400" fill="#dcdcdc" stroke="none"/><circle cx="46.900" cy="8.900" r="3.400" fill="#dcdcdc" stroke="none"/><path d="M23.400 10 V20.500 C23.400 25 26.500 28 30.600 28 C34.700 28 37.800 25 37.800 20.500 V10"/><path d="M0 41.400 C8 50 20 53.300 30 53.300 C40 53.300 52 50 60 41.400"/><g stroke="#1e1e1e" stroke-width="2.600" stroke-linecap="round" stroke-linejoin="round"><path d="M20.800 39.300 C25 39.800 27 36 30 35 C34 34 37.500 37 37.800 41.800"/></g></svg></div>
<div class="abs" style="left:1195.0px;top:643px;width:60px;height:60px;border:1px solid #8c8c8c;background:#fff;overflow:hidden"><svg style="left:-1px;top:-1px" width="60" height="60" viewBox="0 0 60 60" fill="none" stroke="#dcdcdc" stroke-width="1"><circle cx="13" cy="8.900" r="7.300"/><circle cx="46.900" cy="8.900" r="7.300"/><circle cx="13" cy="8.900" r="3.400" fill="#dcdcdc" stroke="none"/><circle cx="46.900" cy="8.900" r="3.400" fill="#dcdcdc" stroke="none"/><path d="M23.400 10 V20.500 C23.400 25 26.500 28 30.600 28 C34.700 28 37.800 25 37.800 20.500 V10"/><path d="M0 41.400 C8 50 20 53.300 30 53.300 C40 53.300 52 50 60 41.400"/><g stroke="#1e1e1e" stroke-width="2.600" stroke-linecap="round" stroke-linejoin="round"><path d="M8.600 34 C10 37 14 37.500 18 36 C24 33.800 30 33.800 36 36 C41 38 47 37.500 50.800 34.500"/></g></svg></div>
<div class="abs" style="left:1264.0px;top:643px;width:60px;height:60px;border:1px solid #8c8c8c;background:#fff;overflow:hidden"><svg style="left:-1px;top:-1px" width="60" height="60" viewBox="0 0 60 60" fill="none" stroke="#dcdcdc" stroke-width="1"><circle cx="13" cy="8.900" r="7.300"/><circle cx="46.900" cy="8.900" r="7.300"/><circle cx="13" cy="8.900" r="3.400" fill="#dcdcdc" stroke="none"/><circle cx="46.900" cy="8.900" r="3.400" fill="#dcdcdc" stroke="none"/><path d="M23.400 10 V20.500 C23.400 25 26.500 28 30.600 28 C34.700 28 37.800 25 37.800 20.500 V10"/><path d="M0 41.400 C8 50 20 53.300 30 53.300 C40 53.300 52 50 60 41.400"/><g stroke="#1e1e1e" stroke-width="2.600" stroke-linecap="round" stroke-linejoin="round"><path d="M8 38.500 C12 37 14 36 16 37.500 C24 41.500 38 41.500 46 37.500 C48 36 50 37 53.400 38.500 M12.500 31.500 L15 37 M50.500 31 L47.500 37"/></g></svg></div>
<div class="abs" style="left:1333.1px;top:643px;width:60px;height:60px;border:1px solid #cfcfcf;background:#fff;overflow:hidden"><svg style="left:-1px;top:-1px" width="60" height="60" viewBox="0 0 60 60" fill="none" stroke="#dcdcdc" stroke-width="1"><circle cx="13" cy="8.900" r="7.300"/><circle cx="46.900" cy="8.900" r="7.300"/><circle cx="13" cy="8.900" r="3.400" fill="#dcdcdc" stroke="none"/><circle cx="46.900" cy="8.900" r="3.400" fill="#dcdcdc" stroke="none"/><path d="M23.400 10 V20.500 C23.400 25 26.500 28 30.600 28 C34.700 28 37.800 25 37.800 20.500 V10"/><path d="M0 41.400 C8 50 20 53.300 30 53.300 C40 53.300 52 50 60 41.400"/><g stroke="#1e1e1e" stroke-width="2.600" stroke-linecap="round" stroke-linejoin="round"><path d="M15.100 37.500 L45.600 37.500" stroke-width="3.600"/></g></svg></div>
<div class="abs" style="left:1402.2px;top:643px;width:60px;height:60px;border:1px solid #8c8c8c;background:#fff;overflow:hidden"><svg style="left:-1px;top:-1px" width="60" height="60" viewBox="0 0 60 60" fill="none" stroke="#dcdcdc" stroke-width="1"><circle cx="13" cy="8.900" r="7.300"/><circle cx="46.900" cy="8.900" r="7.300"/><circle cx="13" cy="8.900" r="3.400" fill="#dcdcdc" stroke="none"/><circle cx="46.900" cy="8.900" r="3.400" fill="#dcdcdc" stroke="none"/><path d="M23.400 10 V20.500 C23.400 25 26.500 28 30.600 28 C34.700 28 37.800 25 37.800 20.500 V10"/><path d="M0 41.400 C8 50 20 53.300 30 53.300 C40 53.300 52 50 60 41.400"/><g stroke="#1e1e1e" stroke-width="2.600" stroke-linecap="round" stroke-linejoin="round"><path d="M17.500 34.900 L44.300 34.900 M19 41.400 L31.300 41.400" stroke-width="2.800"/></g></svg></div>
<div class="abs" style="left:1471.2px;top:643px;width:60px;height:60px;border:1px solid #8c8c8c;background:#fff;overflow:hidden"><svg style="left:-1px;top:-1px" width="60" height="60" viewBox="0 0 60 60" fill="none" stroke="#dcdcdc" stroke-width="1"><circle cx="13" cy="8.900" r="7.300"/><circle cx="46.900" cy="8.900" r="7.300"/><circle cx="13" cy="8.900" r="3.400" fill="#dcdcdc" stroke="none"/><circle cx="46.900" cy="8.900" r="3.400" fill="#dcdcdc" stroke="none"/><path d="M23.400 10 V20.500 C23.400 25 26.500 28 30.600 28 C34.700 28 37.800 25 37.800 20.500 V10"/><path d="M0 41.400 C8 50 20 53.300 30 53.300 C40 53.300 52 50 60 41.400"/><g stroke="#1e1e1e" stroke-width="2.600" stroke-linecap="round" stroke-linejoin="round"><path d="M17.500 34.900 L45.100 34.900 M31.300 41.400 L43.500 41.400" stroke-width="2.800"/></g></svg></div>
<div class="abs" style="left:1540.2px;top:643px;width:60px;height:60px;border:1px solid #8c8c8c;background:#fff;overflow:hidden"><svg style="left:-1px;top:-1px" width="60" height="60" viewBox="0 0 60 60" fill="none" stroke="#dcdcdc" stroke-width="1"><circle cx="13" cy="8.900" r="7.300"/><circle cx="46.900" cy="8.900" r="7.300"/><circle cx="13" cy="8.900" r="3.400" fill="#dcdcdc" stroke="none"/><circle cx="46.900" cy="8.900" r="3.400" fill="#dcdcdc" stroke="none"/><path d="M23.400 10 V20.500 C23.400 25 26.500 28 30.600 28 C34.700 28 37.800 25 37.800 20.500 V10"/><path d="M0 41.400 C8 50 20 53.300 30 53.300 C40 53.300 52 50 60 41.400"/><g stroke="#1e1e1e" stroke-width="2.600" stroke-linecap="round" stroke-linejoin="round"><path d="M15.600 34.100 L44.300 34.100 M19.500 41 C23 39 28 39.500 32 43.300" stroke-width="2.800"/></g></svg></div>
<div class="btn" style="left:1184px;top:728px;width:145px;height:25px;border-color:#e8401c;color:#e8401c;line-height:24.5px">Deform</div>
<div class="btn" style="left:1339px;top:728px;width:145px;height:25px;line-height:24.5px">Transform</div>
<div class="abs" style="left:1494px;top:728px;width:1px;height:25px;background:#9a9a9a"></div>
<div class="btn" style="left:1504px;top:728px;width:120px;height:25px;line-height:24.5px;border-color:#dcdcdc;color:#cfcfcf">Mirror Options</div>
<div class="abs" style="left:1184px;top:768px;width:440px;height:147px;border:1px solid #8c8c8c"></div>
<div class="abs" style="left:1194px;top:762px;width:97px;height:12px;background:#fff"></div>
<div class="t" style="left:1199px;top:760.800px;color:#1c1c1c">Deform Settings</div>
<div class="abs" style="left:1199px;top:786px;width:13px;height:13px;border:1px solid #a8a8a8;background:#fff"></div>
<div class="t" style="left:1221px;top:785px;color:#1c1c1c">Mirror</div>
<div class="btn" style="left:1549px;top:783px;width:25px;height:25px"></div>
<div class="btn" style="left:1584px;top:783px;width:25px;height:25px"></div>
<svg style="left:1554px;top:787px" width="16" height="17" viewBox="0 0 16 17" fill="none" stroke="#222" stroke-width="1.300" stroke-linejoin="round"><path d="M3 1.500h6.500l3.500 3.500v9.500"/><path d="M1.700 3.200h6.300l3 3v9.300h-9.300z" fill="#fff"/></svg>
<svg style="left:1588px;top:787px" width="17" height="17" viewBox="0 0 17 17"><path d="M7.300 1.500v13.500h-5.800z" fill="none" stroke="#222" stroke-width="1.100"/><path d="M9.700 1v14.500h6.300z" fill="#222"/></svg>
<div class="t" style="left:1199px;top:820.800px;color:#1c1c1c">Control Area</div>
<div class="abs" style="left:1199px;top:846px;width:340px;height:1px;background:#8c8c8c"></div>
<div class="abs" style="left:1362px;top:839.500px;width:14px;height:14px;border-radius:7px;border:1.500px solid #8a8a8a;background:#e2e2e2"></div>
<div class="btn" style="left:1549px;top:834px;width:60px;height:25px"></div>
<div class="abs" style="left:1594px;top:835px;width:1px;height:23px;background:#a8a8a8"></div>
<div class="abs" style="left:1595px;top:846px;width:13px;height:1px;background:#d0d0d0"></div>
<svg style="left:1598px;top:838.500px" width="7" height="16" viewBox="0 0 7 16"><path d="M0 4.500h7l-3.500-4.500z M0 11.500h7l-3.500 4.500z" fill="#9a9a9a"/></svg>
<div class="t" style="left:1557px;top:840.800px;color:#1c1c1c">1.0</div>
<div class="btn" style="left:1199px;top:874px;width:198px;height:25px;line-height:24.5px">Increase Strength</div>
<div class="btn" style="left:1411px;top:874px;width:198px;height:25px;line-height:24.5px">Decrease Strength</div>
<div class="btn" style="left:1184px;top:930px;width:140px;height:25px;line-height:24.5px">Preview</div>
<div class="btn" style="left:1334px;top:930px;width:140px;height:25px;line-height:24.5px">Reset</div>
<div class="btn" style="left:1484px;top:930px;width:140px;height:25px;line-height:24.5px">Clear</div>


</div>
</body>
</html>
